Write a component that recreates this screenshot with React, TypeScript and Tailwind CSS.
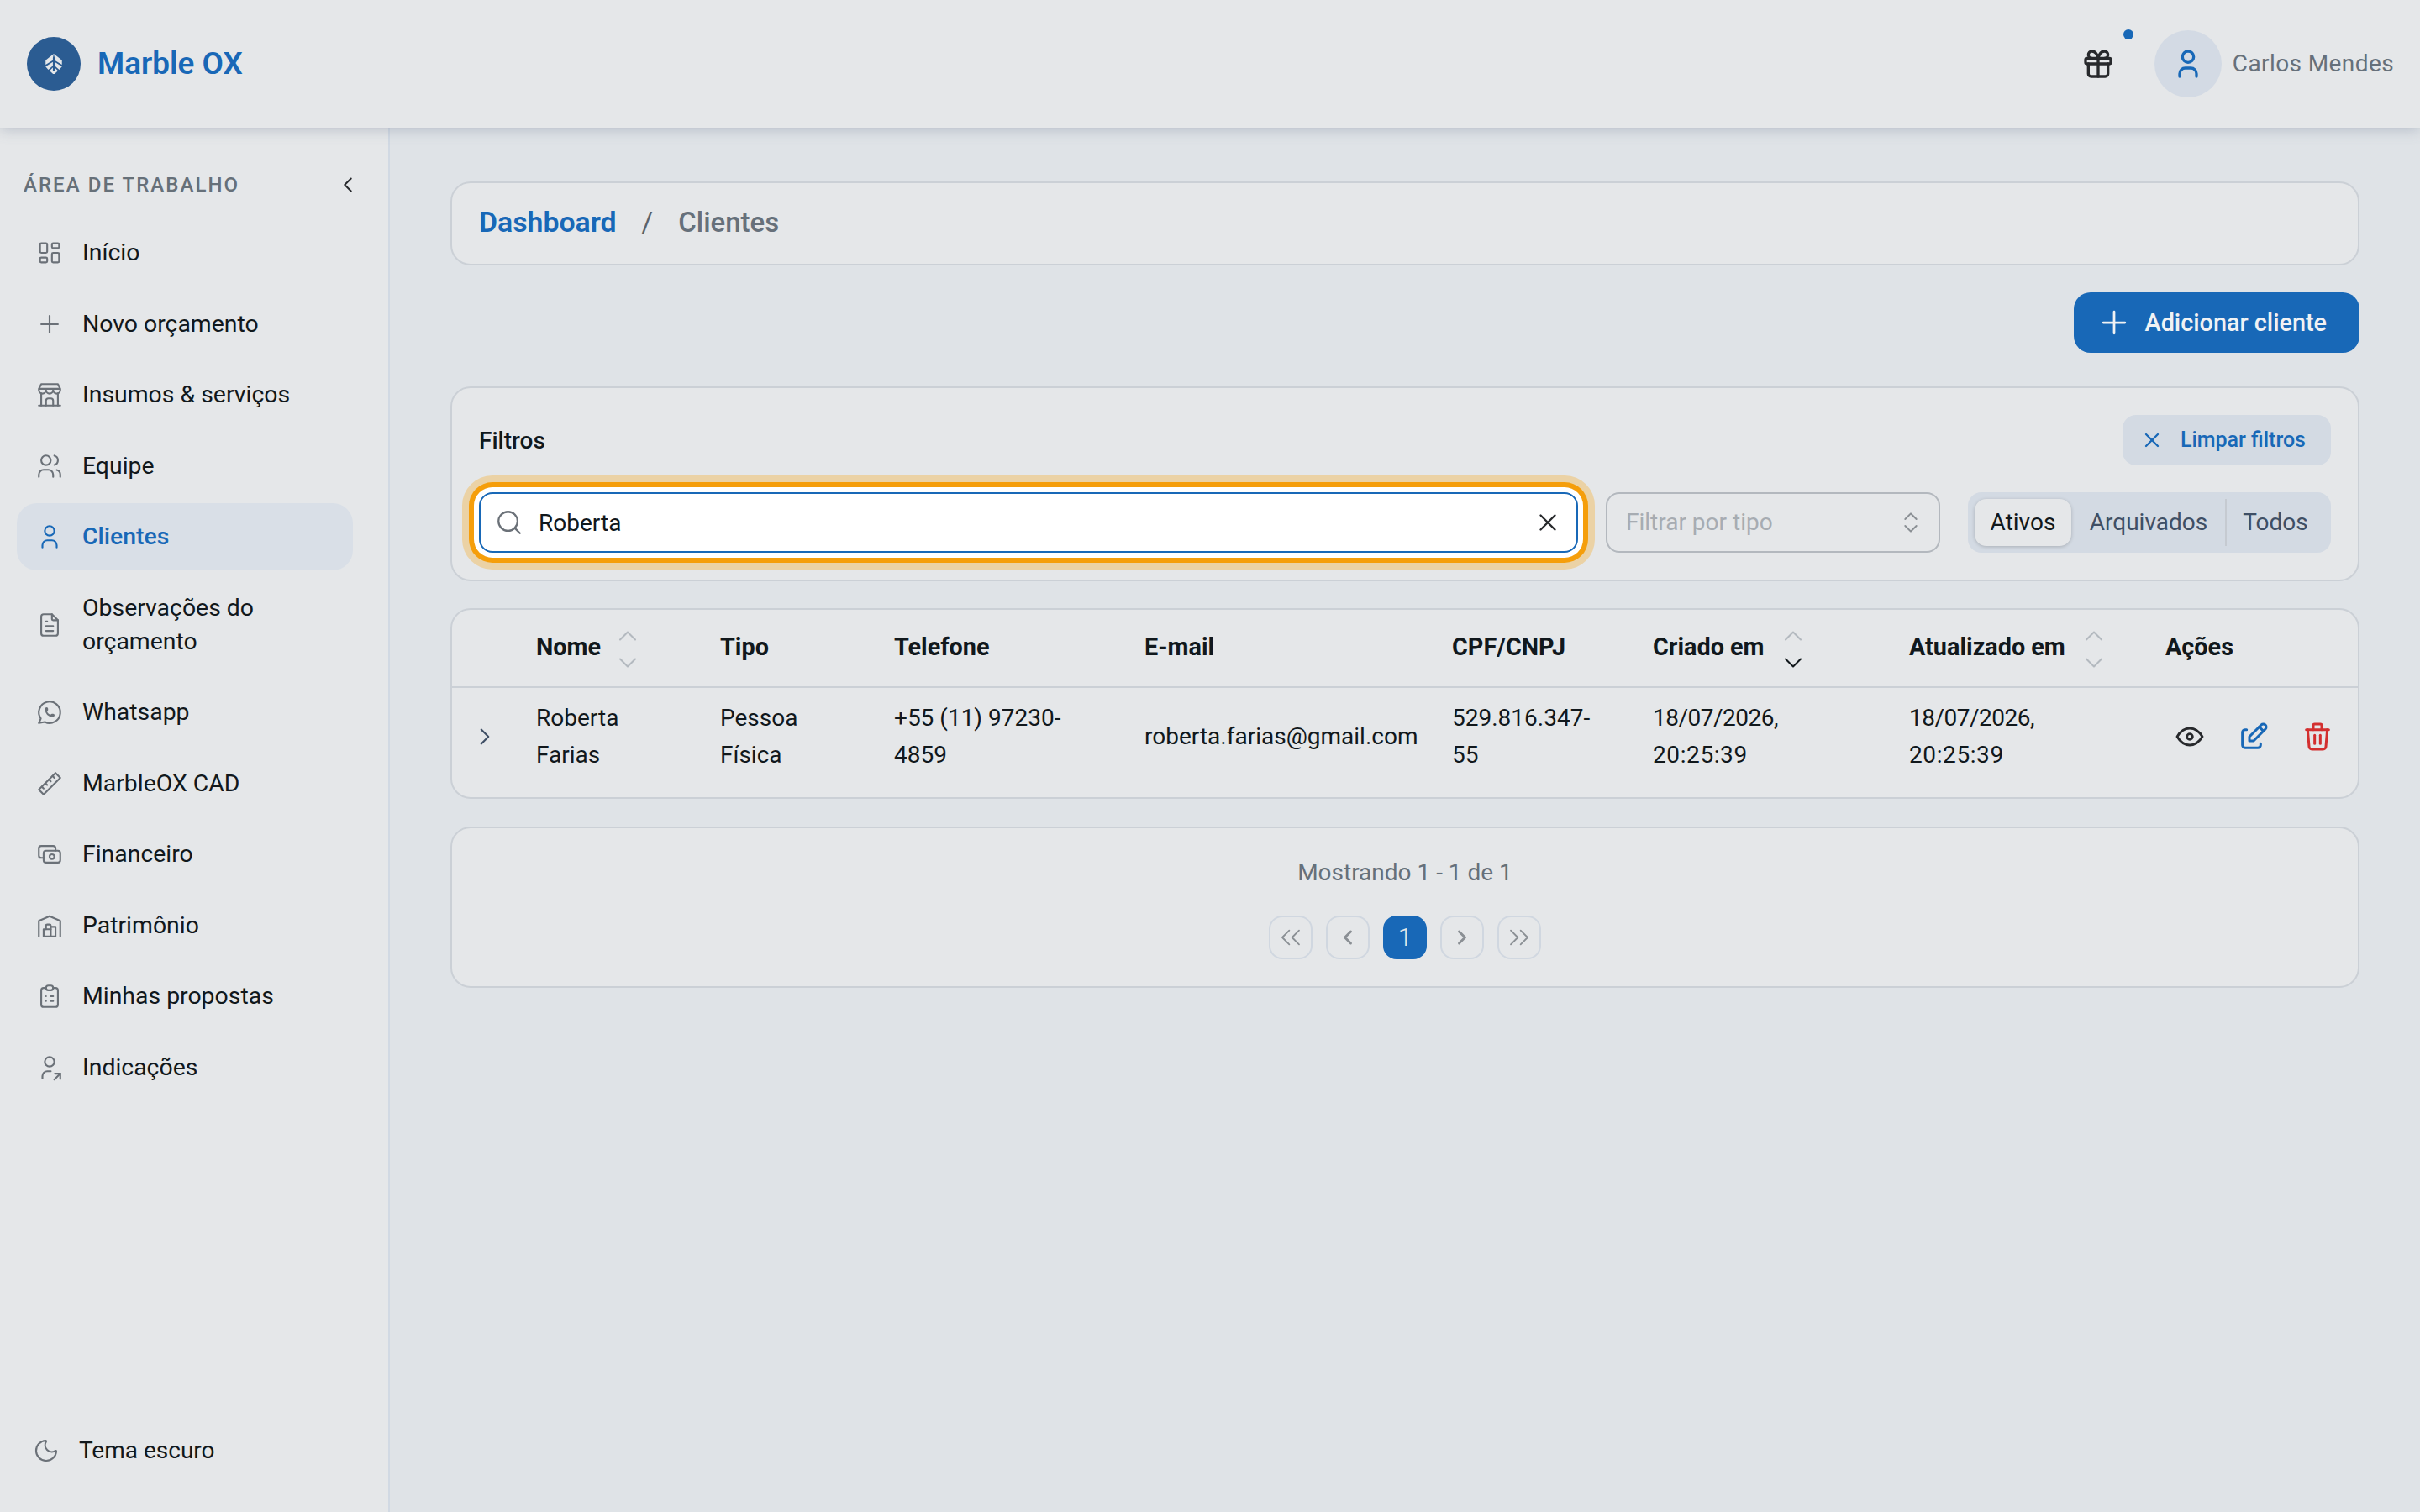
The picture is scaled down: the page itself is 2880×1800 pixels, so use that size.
import { ChevronDown, ChevronLeft, ChevronRight, ChevronUp, ChevronsLeft, ChevronsRight, ChevronsUpDown, Moon, Plus, Search, X } from 'lucide-react'
import {
  TbBrandWhatsapp,
  TbBuildingStore,
  TbBuildingWarehouse,
  TbCash,
  TbClipboardList,
  TbEdit,
  TbEye,
  TbFileText,
  TbGift,
  TbLayoutDashboard,
  TbPlus,
  TbRuler2,
  TbTrash,
  TbUser,
  TbUserShare,
  TbUsers,
} from 'react-icons/tb'

const menu = [
  { label: 'Início', icon: TbLayoutDashboard },
  { label: 'Novo orçamento', icon: TbPlus },
  { label: 'Insumos & serviços', icon: TbBuildingStore },
  { label: 'Equipe', icon: TbUsers },
  { label: 'Clientes', icon: TbUser, active: true },
  { label: 'Observações do orçamento', icon: TbFileText },
  { label: 'Whatsapp', icon: TbBrandWhatsapp },
  { label: 'MarbleOX CAD', icon: TbRuler2 },
  { label: 'Financeiro', icon: TbCash },
  { label: 'Patrimônio', icon: TbBuildingWarehouse },
  { label: 'Minhas propostas', icon: TbClipboardList },
  { label: 'Indicações', icon: TbUserShare },
]

function Sort({ active }: { active?: boolean }) {
  return (
    <span className="flex flex-col items-center text-[#b3b9bf] translate-y-[3px]">
      <ChevronUp className="w-[36px] h-[36px] -my-[2px] stroke-[1.4]" />
      <ChevronDown className={`w-[36px] h-[36px] -my-[2px] stroke-[1.4] ${active ? 'text-[#11181c]' : ''}`} />
    </span>
  )
}

function PageButton({ children }: { children: React.ReactNode }) {
  return (
    <button className="w-[52px] h-[52px] rounded-[16px] border-2 border-[#d0d7e0] flex items-center justify-center text-[#8a8f94]">
      {children}
    </button>
  )
}

export default function App() {
  return (
    <div className="w-[2880px] h-[1800px] flex flex-col bg-[#dfe3e7] text-[28px] leading-[42px] text-[#11181c] font-['Roboto',sans-serif] overflow-hidden">
      <header className="relative z-10 h-[152px] shrink-0 bg-[#e5e7e9] flex items-center justify-between pl-[32px] pr-[31px] shadow-[0_2px_16px_rgba(100,116,139,0.35)]">
        <div className="flex items-center gap-[20px]">
          <div className="w-[64px] h-[64px] rounded-full bg-[#2b5c92] flex items-center justify-center">
            <svg viewBox="0 0 24 24" className="w-[26px] h-[26px] fill-[#e5e7e9]">
              <path d="M12 1 L21 8 V13 L13 8 V5.5 Z M12 1 L3 8 V13 L11 8 V5.5 Z M21 15 L13 10 V14 L18 18.5 Z M3 15 L11 10 V14 L6 18.5 Z M13 16 L16.5 19.5 L12.8 23 H11.2 L7.5 19.5 L11 16 V19.5 H13 Z" />
            </svg>
          </div>
          <span className="text-[36.8px] font-semibold text-[#1868b7]">Marble OX</span>
        </div>
        <div className="flex items-center">
          <div className="relative w-[72px] h-[72px] flex items-center justify-center text-[#27292c] mr-[31px]">
            <TbGift className="w-[40px] h-[40px]" />
            <span className="absolute right-[-6px] top-[-5px] w-[12px] h-[12px] rounded-full bg-[#1868b7]" />
          </div>
          <div className="w-[80px] h-[80px] rounded-full bg-[#d3dae4] flex items-center justify-center text-[#1868b7]">
            <TbUser className="w-[40px] h-[40px]" />
          </div>
          <span className="ml-[13px] text-[#66707a] tracking-[0.4px] text-[28px]">Carlos Mendes</span>
        </div>
      </header>

      <div className="flex-1 flex min-h-0">
        <aside className="w-[464px] shrink-0 bg-[#e5e7e9] border-r-2 border-[#d1d9e3] flex flex-col pl-[20px] pr-[42px]">
          <div className="flex items-center justify-between h-[40px] mt-[48px] mb-[21px] pl-[8px]">
            <span className="text-[24px] font-medium tracking-[2.05px] text-[#667079]">ÁREA DE TRABALHO</span>
            <ChevronLeft className="w-[30px] h-[30px] text-[#27292c] stroke-[1.6] mr-[-9px]" />
          </div>
          <nav className="flex flex-col gap-[4.5px] leading-[40px] text-[28.4px]">
            {menu.map(item => (
              <a
                key={item.label}
                className={`flex items-center gap-[22px] pl-[22px] pr-[20px] rounded-[24px] ${item.label.startsWith('Observ') ? 'h-[120px]' : 'h-[80px]'} ${item.active ? 'bg-[#d9dfe7] text-[#1868b7] font-medium' : ''}`}
              >
                <item.icon className={`w-[34px] h-[34px] shrink-0 stroke-[1.5] ${item.active ? 'text-[#1868b7]' : 'text-[#6b7178]'}`} />
                <span>{item.label}</span>
              </a>
            ))}
          </nav>
          <div className="mt-auto mb-[52px] flex items-center gap-[23px] pl-[19px]">
            <Moon className="w-[32px] h-[32px] text-[#6b7178] stroke-[1.6]" />
            <span>Tema escuro</span>
          </div>
        </aside>

        <main className="flex-1 min-w-0 px-[72px] pt-[64px]">
          <div className="h-[100px] rounded-[24px] border-2 border-[#cbd0d6] bg-[#e5e7e9] flex items-center px-[32px] pb-[2px] text-[33px]">
            <span className="font-semibold text-[33.8px] text-[#1868b7]">Dashboard</span>
            <span className="mx-[30px] text-[#5b6269]">/</span>
            <span className="font-medium text-[#66707a]">Clientes</span>
          </div>

          <div className="flex justify-end mt-[32px]">
            <button className="h-[72px] w-[340px] rounded-[20px] bg-[#1868b7] text-[#f0f2f4] font-medium text-[28.8px] flex items-center justify-end gap-[15px] pr-[39px]">
              <Plus className="w-[44px] h-[44px] stroke-[1.5]" />
              Adicionar cliente
            </button>
          </div>

          <section className="mt-[40px] rounded-[24px] border-2 border-[#cbd0d6] bg-[#e5e7e9] p-[32px]">
            <div className="h-[60px] flex items-center justify-between">
              <span className="font-medium pt-[1px]">Filtros</span>
              <button className="h-[60px] w-[248px] rounded-[16px] bg-[#d3dae3] text-[#1868b7] text-[25px] font-medium flex items-center justify-end gap-[20px] pr-[30px]">
                <X className="w-[28px] h-[28px]" />
                Limpar filtros
              </button>
            </div>
            <div className="mt-[32px] flex items-center">
              <div className="w-[1308px] h-[72px] rounded-[16px] border-2 border-[#1868b7] bg-white flex items-center pl-[17px] pr-[17px] shadow-[0_0_0_6px_#ffffff,0_0_0_12px_#f59e0b,0_0_0_20px_#ebd2a5]">
                <Search className="w-[34px] h-[34px] text-[#6b7178] stroke-[1.6]" />
                <span className="ml-[18px] flex-1 pt-[2px]">Roberta</span>
                <X className="w-[34px] h-[34px] text-[#27292c] stroke-[1.7]" />
              </div>
              <div className="ml-[33px] w-[398px] h-[72px] rounded-[16px] border-2 border-[#b3b8be] flex items-center justify-between pl-[22px] pr-[17px] text-[#a7acb2]">
                <span>Filtrar por tipo</span>
                <ChevronsUpDown className="w-[32px] h-[32px] text-[#8a8f94] stroke-[1.5]" />
              </div>
              <div className="ml-[33px] flex-1 h-[72px] rounded-[16px] bg-[#d3dae3] flex items-center px-[8px] text-[#3f4f65]">
                <span className="w-[115px] h-[56px] rounded-[14px] bg-[#e5e7e9] text-[#11181c] flex items-center justify-center shadow-[0_1px_4px_rgba(0,0,0,0.2)]">Ativos</span>
                <span className="w-[185px] pl-[1px] flex items-center justify-center border-r-2 border-[#c5cad1] h-[56px]">Arquivados</span>
                <span className="flex-1 text-center">Todos</span>
              </div>
            </div>
          </section>

          <section className="mt-[32px] rounded-[24px] border-2 border-[#cbd0d6] bg-[#e5e7e9]">
            <table className="w-full table-fixed">
              <colgroup>
                <col className="w-[80px]" />
                <col className="w-[219px]" />
                <col className="w-[207px]" />
                <col className="w-[298px]" />
                <col className="w-[366px]" />
                <col className="w-[239px]" />
                <col className="w-[305px]" />
                <col className="w-[305px]" />
                <col />
              </colgroup>
              <thead>
                <tr className="h-[92px] border-b-2 border-[#cbd0d6] text-left font-bold text-[28.8px] [&>th]:pb-[3px]">
                  <th />
                  <th className="px-[20px]"><div className="flex items-center gap-[14px]">Nome <Sort /></div></th>
                  <th className="px-[20px]">Tipo</th>
                  <th className="px-[20px]">Telefone</th>
                  <th className="px-[20px]">E-mail</th>
                  <th className="px-[20px]">CPF/CNPJ</th>
                  <th className="px-[20px]"><div className="flex items-center gap-[16px]">Criado em <Sort active /></div></th>
                  <th className="px-[20px]"><div className="flex items-center gap-[16px]">Atualizado em <Sort /></div></th>
                  <th className="px-[20px]">Ações</th>
                </tr>
              </thead>
              <tbody>
                <tr className="h-[131px] leading-[44px] [&>td]:pb-[14px]">
                  <td className="pl-[22px]"><ChevronRight className="w-[34px] h-[34px] text-[#3f4f65] stroke-[1.5]" /></td>
                  <td className="px-[20px]">Roberta<br />Farias</td>
                  <td className="px-[20px]">Pessoa<br />Física</td>
                  <td className="px-[20px] whitespace-nowrap">+55 (11) 97230-<br />4859</td>
                  <td className="px-[20px] whitespace-nowrap">roberta.farias@gmail.com</td>
                  <td className="px-[20px] whitespace-nowrap">529.816.347-<br />55</td>
                  <td className="px-[20px]"><span className="tracking-[-0.5px]">18/07/2026,</span><br /><span className="tracking-[0.6px]">20:25:39</span></td>
                  <td className="px-[20px]"><span className="tracking-[-0.5px]">18/07/2026,</span><br /><span className="tracking-[0.6px]">20:25:39</span></td>
                  <td className="pl-[29px]">
                    <div className="flex items-center gap-[36px]">
                      <TbEye className="w-[40px] h-[40px] text-[#27292c] stroke-[1.7]" />
                      <TbEdit className="w-[40px] h-[40px] text-[#1868b7] stroke-[1.8]" />
                      <TbTrash className="w-[40px] h-[40px] text-[#d32f2f] stroke-[1.8]" />
                    </div>
                  </td>
                </tr>
              </tbody>
            </table>
          </section>

          <section className="mt-[33px] rounded-[24px] border-2 border-[#cbd0d6] bg-[#e5e7e9] p-[32px] flex flex-col items-center gap-[30px]">
            <span className="text-[#66707a]">Mostrando 1 - 1 de 1</span>
            <div className="flex items-center gap-[16px]">
              <PageButton><ChevronsLeft className="w-[40px] h-[40px] stroke-[1.1]" /></PageButton>
              <PageButton><ChevronLeft className="w-[28px] h-[28px] stroke-[2.5]" /></PageButton>
              <button className="w-[52px] h-[52px] rounded-[16px] bg-[#1868b7] text-[#e5e7e9] text-[30px] font-light flex items-center justify-center">1</button>
              <PageButton><ChevronRight className="w-[28px] h-[28px] stroke-[2.5]" /></PageButton>
              <PageButton><ChevronsRight className="w-[40px] h-[40px] stroke-[1.1]" /></PageButton>
            </div>
          </section>
        </main>
      </div>
    </div>
  )
}
